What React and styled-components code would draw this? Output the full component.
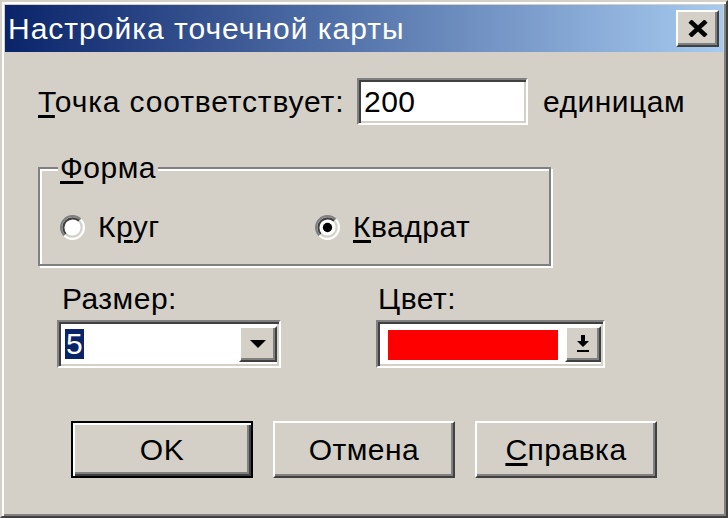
import React from 'react';
import styled, { createGlobalStyle, css } from 'styled-components';

const GlobalStyle = createGlobalStyle`
  body {
    margin: 0;
    background: #d4d0c8;
  }
`;

const raised = css`
  border: 2px solid;
  border-color: #ffffff #404040 #404040 #ffffff;
  box-shadow: inset -2px -2px 0 #808080;
  background: #d4d0c8;
`;

const sunken = css`
  border: 2px solid;
  border-color: #808080 #ffffff #ffffff #808080;
  box-shadow: inset 2px 2px 0 #404040, inset -2px -2px 0 #d4d0c8;
  background: #ffffff;
`;

const Window = styled.div`
  box-sizing: border-box;
  width: 728px;
  height: 518px;
  display: flex;
  flex-direction: column;
  padding: 3px;
  background: #d4d0c8;
  border: 2px solid;
  border-color: #d4d0c8 #404040 #404040 #d4d0c8;
  box-shadow: inset 2px 2px 0 #ffffff, inset -2px -2px 0 #808080;
  font-family: "Liberation Sans", Arial, sans-serif;
  font-size: 30px;
  letter-spacing: 0.5px;
  color: #000;
`;

const TitleBar = styled.div`
  height: 47px;
  display: flex;
  align-items: center;
  justify-content: space-between;
  padding: 0 4px 0 3px;
  background: linear-gradient(to right, #0a246a, #a6caf0);
`;

const TitleText = styled.span`
  color: #fff;
  font-size: 30px;
  letter-spacing: 1px;
`;

const CloseButton = styled.div`
  ${raised};
  box-sizing: border-box;
  width: 43px;
  height: 37px;
  display: flex;
  align-items: center;
  justify-content: center;
`;

const Row = styled.div`
  display: flex;
  align-items: center;
  margin-top: ${p => p.$top}px;
  padding-left: ${p => p.$left}px;
`;

const Label = styled.span`
  display: inline-block;
  width: ${p => (p.$width ? `${p.$width}px` : 'auto')};
  line-height: 34px;
  padding-left: ${p => p.$indent || 0}px;
  letter-spacing: ${p => p.$spacing || 0.5}px;
`;

const Key = styled.span`
  text-decoration: underline;
  text-underline-offset: 3px;
`;

const TextInput = styled.div`
  ${sunken};
  box-sizing: border-box;
  width: 171px;
  height: 47px;
  padding-left: 5px;
  display: flex;
  align-items: center;
  margin-right: 15px;
`;

const GroupBox = styled.div`
  box-sizing: border-box;
  width: 513px;
  height: 99px;
  margin: 42px 0 0 33px;
  border: 2px solid #808080;
  box-shadow: inset 2px 2px 0 #ffffff, 2px 2px 0 #ffffff;
`;

const GroupTitle = styled.div`
  width: fit-content;
  margin: -18px 0 0 18px;
  padding: 0 2px;
  line-height: 34px;
  background: #d4d0c8;
`;

const RadioRow = styled.div`
  display: flex;
  align-items: center;
  margin-top: 25px;
  padding-left: 20px;
`;

const RadioOption = styled.div`
  display: flex;
  align-items: center;
  gap: 13px;
  width: ${p => (p.$width ? `${p.$width}px` : 'auto')};
  line-height: 34px;
`;

const FieldColumn = styled.div`
  display: flex;
  flex-direction: column;
  gap: 4px;
  width: ${p => (p.$width ? `${p.$width}px` : 'auto')};
`;

const Combo = styled.div`
  ${sunken};
  box-sizing: border-box;
  width: ${p => p.$width}px;
  height: 48px;
  padding: 4px 2px 4px 4px;
  display: flex;
  align-items: stretch;
`;

const ComboValue = styled.div`
  flex: 1;
  display: flex;
  align-items: center;
  padding-left: 2px;
`;

const Selected = styled.span`
  background: #0a246a;
  color: #fff;
  line-height: 30px;
  padding: 0 1px;
`;

const Swatch = styled.div`
  flex: 1;
  margin: 4px 7px 2px 6px;
  background: ${p => p.$color};
`;

const DropButton = styled.div`
  ${raised};
  box-sizing: border-box;
  width: ${p => p.$width}px;
  display: flex;
  align-items: center;
  justify-content: center;
`;

const ButtonRow = styled.div`
  display: flex;
  gap: 20px;
  margin-top: 53px;
  padding-left: 66px;
`;

const Button = styled.div`
  box-sizing: border-box;
  width: 182px;
  height: 57px;
  display: flex;
  align-items: center;
  justify-content: center;
  background: #d4d0c8;
  ${p =>
    p.$default
      ? css`
          border: 2px solid #000;
          box-shadow: inset 2px 2px 0 #ffffff, inset -2px -2px 0 #404040,
            inset -4px -4px 0 #808080;
        `
      : css`
          border: 2px solid;
          border-color: #ffffff #404040 #404040 #ffffff;
          box-shadow: inset -2px -2px 0 #808080;
        `}
`;

const Radio = ({ checked }) => (
  <svg width="25" height="25" viewBox="0 0 24 24">
    <circle cx="12" cy="12" r="10" fill="#fff" />
    <path d="M4.22 19.78 A11 11 0 0 1 19.78 4.22" fill="none" stroke="#808080" strokeWidth="2" />
    <path d="M19.78 4.22 A11 11 0 0 1 4.22 19.78" fill="none" stroke="#fff" strokeWidth="2" />
    <path d="M5.64 18.36 A9 9 0 0 1 18.36 5.64" fill="none" stroke="#404040" strokeWidth="2" />
    <path d="M18.36 5.64 A9 9 0 0 1 5.64 18.36" fill="none" stroke="#d4d0c8" strokeWidth="2" />
    {checked && <circle cx="12" cy="12" r="4.5" fill="#000" />}
  </svg>
);

const CloseIcon = () => (
  <svg width="20" height="17" viewBox="0 0 20 17">
    <path d="M2 1 L18 16 M18 1 L2 16" stroke="#000" strokeWidth="4.5" />
  </svg>
);

const ArrowDown = () => (
  <svg width="16" height="9" viewBox="0 0 16 9">
    <path d="M0 0 H16 L8 8 Z" fill="#000" />
  </svg>
);

const ArrowToBar = () => (
  <svg width="14" height="18" viewBox="0 0 14 18">
    <path d="M5 0 H9 V6 H13 L7 12 L1 6 H5 Z" fill="#000" />
    <rect x="1" y="15" width="12" height="2" fill="#000" />
  </svg>
);

export default function App() {
  return (
    <>
      <GlobalStyle />
      <Window>
        <TitleBar>
          <TitleText>Настройка точечной карты</TitleText>
          <CloseButton>
            <CloseIcon />
          </CloseButton>
        </TitleBar>

        <Row $top={26} $left={33}>
          <Label $width={319} $spacing={0.85}>
            <Key>Т</Key>очка соответствует:
          </Label>
          <TextInput>200</TextInput>
          <Label>единицам</Label>
        </Row>

        <GroupBox>
          <GroupTitle>
            <Key>Ф</Key>орма
          </GroupTitle>
          <RadioRow>
            <RadioOption $width={255}>
              <Radio />
              <span>
                К<Key>р</Key>уг
              </span>
            </RadioOption>
            <RadioOption>
              <Radio checked />
              <span>
                <Key>К</Key>вадрат
              </span>
            </RadioOption>
          </RadioRow>
        </GroupBox>

        <Row $top={16} $left={52}>
          <FieldColumn $width={319}>
            <Label $indent={5}>Размер:</Label>
            <Combo $width={224}>
              <ComboValue>
                <Selected>5</Selected>
              </ComboValue>
              <DropButton $width={38}>
                <ArrowDown />
              </DropButton>
            </Combo>
          </FieldColumn>
          <FieldColumn>
            <Label $indent={2}>Цвет:</Label>
            <Combo $width={229}>
              <Swatch $color="#ff0000" />
              <DropButton $width={36}>
                <ArrowToBar />
              </DropButton>
            </Combo>
          </FieldColumn>
        </Row>

        <ButtonRow>
          <Button $default>OK</Button>
          <Button>Отмена</Button>
          <Button>
            <Key>С</Key>правка
          </Button>
        </ButtonRow>
      </Window>
    </>
  );
}
